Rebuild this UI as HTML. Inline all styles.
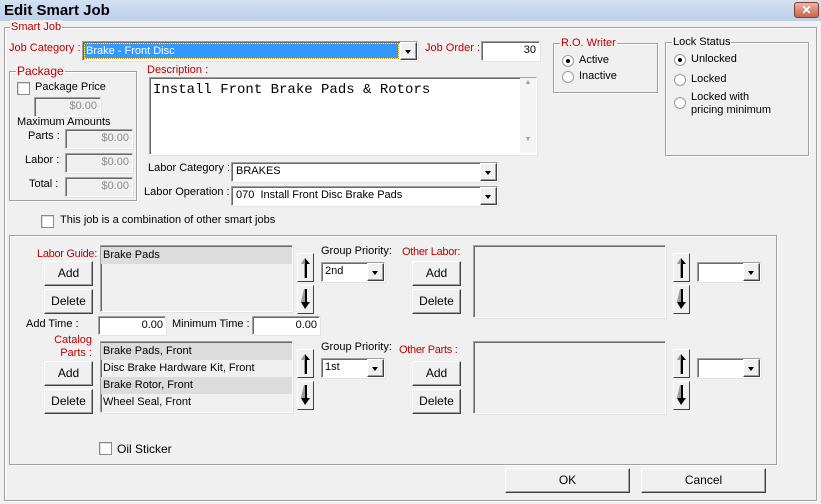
<!DOCTYPE html>
<html><head><style>
*{box-sizing:border-box;margin:0;padding:0}
body{width:821px;height:504px;background:#f0f0f0;font-family:"Liberation Sans",sans-serif;font-size:11px;color:#000;position:relative;overflow:hidden}
.a{position:absolute;white-space:nowrap}
.r{color:#c00000}
.gb{position:absolute;border:1px solid #a0a0a0;box-shadow:1px 1px 0 #fff, inset 1px 1px 0 #fff}
.gl{position:absolute;top:-8px;left:6px;background:#f0f0f0;padding:0 1px;line-height:14px}
.sk{position:absolute;background:#fff;border-top:1px solid #a0a0a0;border-left:1px solid #a0a0a0;border-bottom:1px solid #fff;border-right:1px solid #fff;box-shadow:inset 1px 1px 0 #696969, 1px 1px 0 #e3e3e3}
.dis{background:#f0f0f0;color:#8a8a8a;text-align:right;padding-right:3px;line-height:17px}
.btn{position:absolute;background:#f0f0f0;border-top:1px solid #fff;border-left:1px solid #fff;border-right:1px solid #404040;border-bottom:1px solid #404040;box-shadow:inset -1px -1px 0 #a0a0a0;text-align:center;line-height:22px;font-size:12px}
.dd{position:absolute;right:0;top:0;bottom:0;width:17px;background:#f0f0f0;border-top:1px solid #fff;border-left:1px solid #fff;border-right:1px solid #404040;border-bottom:1px solid #404040;box-shadow:inset -1px -1px 0 #a0a0a0}
.dd:after{content:"";position:absolute;left:4px;top:7px;border-left:3.5px solid transparent;border-right:3.5px solid transparent;border-top:4px solid #000}
.cb{position:absolute;width:13px;height:13px;background:#fff;border:1px solid #8a8a8a;box-shadow:inset 1px 1px 0 #dcdcdc}
.rb{position:absolute;width:12px;height:12px;border-radius:50%;background:#fff;border:1px solid #9a9a9a}
.rb.on:after{content:"";position:absolute;left:3px;top:3px;width:4px;height:4px;border-radius:50%;background:#000}
.arr{position:absolute;width:17px;height:29px;background:#f0f0f0;border-top:1px solid #fff;border-left:1px solid #fff;border-right:1px solid #404040;border-bottom:1px solid #404040}
.row{height:17px;line-height:17px;padding-left:2px;font-size:11px}
.g{background:#dcdcdc}
</style></head><body>
<div class="a" style="left:0;top:0;width:821px;height:21px;background:linear-gradient(#d2e0f2,#bcd0ea)"></div>
<div class="a" style="left:4px;top:1px;font-size:15px;font-weight:bold;line-height:20px">Edit Smart Job</div>
<div class="a" style="left:794px;top:2px;width:25px;height:16px;border-radius:3px;background:linear-gradient(#e9b5a8,#c96450);border:1px solid #8a3a2a;color:#fff;text-align:center;font-size:12px;line-height:14px;font-weight:bold">✕</div>

<div class="gb" style="left:4px;top:27px;width:813px;height:474px"><span class="gl r" style="left:5px">Smart Job</span></div>

<div class="a r" style="left:9px;top:42px">Job Category :</div>
<div class="sk" style="left:82px;top:41px;width:336px;height:20px;background:#fff">
<div class="a" style="left:2px;top:2px;width:313px;height:14px;background:#3399ff;color:#fff;outline:1px dotted #c88a00;line-height:14px;padding-left:1px">Brake - Front Disc</div><div class="dd"></div></div>
<div class="a r" style="left:425px;top:42px">Job Order :</div>
<div class="sk" style="left:481px;top:41px;width:59px;height:20px;text-align:right;padding-right:3px;line-height:17px">30</div>

<div class="gb" style="left:553px;top:43px;width:105px;height:50px"><span class="gl r">R.O. Writer</span></div>
<div class="rb on" style="left:562px;top:55px"></div><div class="a" style="left:579px;top:54px">Active</div>
<div class="rb" style="left:562px;top:71px"></div><div class="a" style="left:579px;top:70px">Inactive</div>

<div class="gb" style="left:665px;top:42px;width:144px;height:114px"><span class="gl">Lock Status</span></div>
<div class="rb on" style="left:674px;top:54px"></div><div class="a" style="left:691px;top:53px">Unlocked</div>
<div class="rb" style="left:674px;top:74px"></div><div class="a" style="left:691px;top:73px">Locked</div>
<div class="rb" style="left:674px;top:97px"></div><div class="a" style="left:691px;top:91px;line-height:13px">Locked with<br>pricing minimum</div>

<div class="gb" style="left:9px;top:71px;width:128px;height:130px"><span class="gl r" style="font-size:12px">Package</span></div>
<div class="cb" style="left:17px;top:82px"></div><div class="a" style="left:35px;top:81px">Package Price</div>
<div class="sk dis" style="left:34px;top:97px;width:67px;height:20px">$0.00</div>
<div class="a" style="left:17px;top:116px">Maximum Amounts</div>
<div class="a" style="left:28px;top:130px">Parts :</div><div class="sk dis" style="left:65px;top:129px;width:68px;height:20px">$0.00</div>
<div class="a" style="left:25px;top:154px">Labor :</div><div class="sk dis" style="left:65px;top:153px;width:68px;height:20px">$0.00</div>
<div class="a" style="left:29px;top:178px">Total :</div><div class="sk dis" style="left:65px;top:177px;width:68px;height:20px">$0.00</div>

<div class="a r" style="left:147px;top:64px">Description :</div>
<div class="sk" style="left:149px;top:77px;width:388px;height:78px">
<div class="a" style="left:3px;top:4px;font-family:'Liberation Mono',monospace;font-size:14px">Install Front Brake Pads &amp; Rotors</div>
<div class="a" style="right:0;top:0;width:16px;height:75px;background:#f4f4f4;color:#a0a0a0;font-size:7px;text-align:center;line-height:9px">▲<div style="margin-top:48px">▼</div></div></div>

<div class="a" style="left:148px;top:162px">Labor Category :</div>
<div class="sk" style="left:231px;top:162px;width:267px;height:20px;line-height:17px;padding-left:4px">BRAKES<div class="dd"></div></div>
<div class="a" style="left:144px;top:186px">Labor Operation :</div>
<div class="sk" style="left:231px;top:186px;width:267px;height:20px;line-height:17px;padding-left:4px">070&nbsp; Install Front Disc Brake Pads<div class="dd"></div></div>

<div class="cb" style="left:41px;top:215px"></div><div class="a" style="left:60px;top:214px">This job is a combination of other smart jobs</div>

<div class="gb" style="left:9px;top:235px;width:768px;height:230px"></div>

<div class="a r" style="right:724px;top:248px;letter-spacing:-0.3px">Labor Guide:</div>
<div class="btn" style="left:44px;top:261px;width:49px;height:25px">Add</div>
<div class="btn" style="left:44px;top:289px;width:49px;height:25px">Delete</div>
<div class="sk" style="left:100px;top:245px;width:193px;height:67px;background:#f0f0f0"><div class="row g" style="margin-top:1px">Brake Pads</div></div>
<div class="arr" style="left:297px;top:253px"><svg width="15" height="27"><path d="M7 4 L3 10 H6 V24 H9 V10 H12 Z" fill="#000"/><path d="M7 4 L3 10 H6 V24 H7Z" fill="#999"/></svg></div>
<div class="arr" style="left:297px;top:285px"><svg width="15" height="27"><path d="M6 3 H9 V16 H12 L7 23 L3 16 H6 Z" fill="#000"/><path d="M6 3 H7 V16 H3Z" fill="#999"/></svg></div>
<div class="a" style="left:321px;top:245px">Group Priority:</div>
<div class="sk" style="left:321px;top:262px;width:64px;height:20px;line-height:17px;padding-left:3px">2nd<div class="dd"></div></div>

<div class="a" style="left:26px;top:318px">Add Time :</div>
<div class="sk" style="left:98px;top:316px;width:68px;height:19px;text-align:right;padding-right:2px;line-height:16px">0.00</div>
<div class="a" style="left:172px;top:318px">Minimum Time :</div>
<div class="sk" style="left:252px;top:316px;width:68px;height:19px;text-align:right;padding-right:2px;line-height:16px">0.00</div>

<div class="a r" style="right:729px;top:334px;text-align:right;line-height:12.5px">Catalog<br>Parts :</div>
<div class="btn" style="left:44px;top:361px;width:49px;height:25px">Add</div>
<div class="btn" style="left:44px;top:389px;width:49px;height:25px">Delete</div>
<div class="sk" style="left:100px;top:341px;width:193px;height:72px;background:#f0f0f0"><div class="row g" style="margin-top:1px">Brake Pads, Front</div><div class="row">Disc Brake Hardware Kit, Front</div><div class="row g">Brake Rotor, Front</div><div class="row">Wheel Seal, Front</div></div>
<div class="arr" style="left:297px;top:349px"><svg width="15" height="27"><path d="M7 4 L3 10 H6 V24 H9 V10 H12 Z" fill="#000"/><path d="M7 4 L3 10 H6 V24 H7Z" fill="#999"/></svg></div>
<div class="arr" style="left:297px;top:381px"><svg width="15" height="27"><path d="M6 3 H9 V16 H12 L7 23 L3 16 H6 Z" fill="#000"/><path d="M6 3 H7 V16 H3Z" fill="#999"/></svg></div>
<div class="a" style="left:321px;top:341px">Group Priority:</div>
<div class="sk" style="left:321px;top:358px;width:64px;height:20px;line-height:17px;padding-left:3px">1st<div class="dd"></div></div>

<div class="a r" style="left:402px;top:246px;letter-spacing:-0.3px">Other Labor:</div>
<div class="btn" style="left:412px;top:261px;width:49px;height:25px">Add</div>
<div class="btn" style="left:412px;top:289px;width:49px;height:25px">Delete</div>
<div class="sk" style="left:473px;top:245px;width:193px;height:73px;background:#f0f0f0"></div>
<div class="arr" style="left:673px;top:253px"><svg width="15" height="27"><path d="M7 4 L3 10 H6 V24 H9 V10 H12 Z" fill="#000"/><path d="M7 4 L3 10 H6 V24 H7Z" fill="#999"/></svg></div>
<div class="arr" style="left:673px;top:285px"><svg width="15" height="27"><path d="M6 3 H9 V16 H12 L7 23 L3 16 H6 Z" fill="#000"/><path d="M6 3 H7 V16 H3Z" fill="#999"/></svg></div>
<div class="sk" style="left:697px;top:262px;width:64px;height:20px"><div class="dd"></div></div>

<div class="a r" style="left:399px;top:344px;letter-spacing:-0.3px">Other Parts :</div>
<div class="btn" style="left:412px;top:361px;width:49px;height:25px">Add</div>
<div class="btn" style="left:412px;top:389px;width:49px;height:25px">Delete</div>
<div class="sk" style="left:473px;top:341px;width:193px;height:73px;background:#f0f0f0"></div>
<div class="arr" style="left:673px;top:349px"><svg width="15" height="27"><path d="M7 4 L3 10 H6 V24 H9 V10 H12 Z" fill="#000"/><path d="M7 4 L3 10 H6 V24 H7Z" fill="#999"/></svg></div>
<div class="arr" style="left:673px;top:381px"><svg width="15" height="27"><path d="M6 3 H9 V16 H12 L7 23 L3 16 H6 Z" fill="#000"/><path d="M6 3 H7 V16 H3Z" fill="#999"/></svg></div>
<div class="sk" style="left:697px;top:358px;width:64px;height:20px"><div class="dd"></div></div>

<div class="cb" style="left:99px;top:442px"></div><div class="a" style="left:117px;top:442px;font-size:12px">Oil Sticker</div>

<div class="btn" style="left:505px;top:468px;width:125px;height:25px">OK</div>
<div class="btn" style="left:641px;top:468px;width:125px;height:25px">Cancel</div>
</body></html>
